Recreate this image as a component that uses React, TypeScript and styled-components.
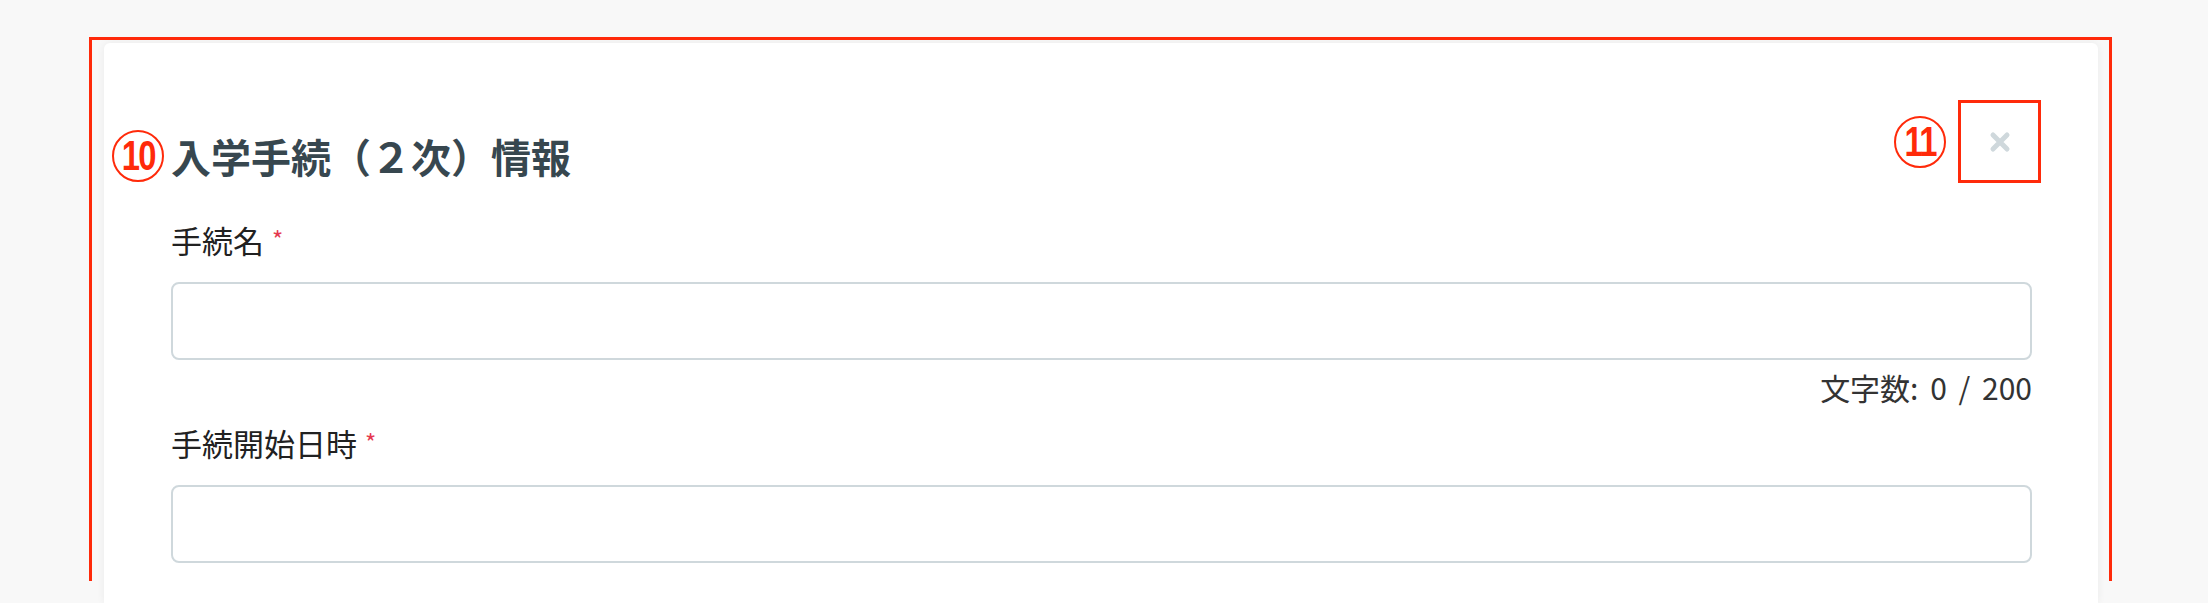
import styled, { createGlobalStyle } from 'styled-components'

const GlobalStyle = createGlobalStyle`
  html, body {
    margin: 0;
    padding: 0;
    background: #f8f8f8;
  }
  body {
    font-family: "Noto Sans CJK JP", "Noto Sans", sans-serif;
  }
`

const Page = styled.div`
  position: relative;
  height: 603px;
  overflow: hidden;
  box-sizing: border-box;
  padding: 43px 110px 0 104px;
  display: flex;
  flex-direction: column;
`

// red annotation frame drawn over the section
const Marker = styled.div`
  position: absolute;
  left: 89px;
  top: 37px;
  width: 2023px;
  height: 544px;
  box-sizing: border-box;
  border: 3px solid #ff2a0a;
  border-bottom: none;
  pointer-events: none;
`

const Card = styled.section`
  flex: 1;
  background: #fff;
  border-radius: 6px 6px 0 0;
  box-shadow: 0 0 8px rgba(0, 0, 0, 0.06);
  padding: 57px 57px 0 8px;
`

const Header = styled.div`
  display: flex;
  justify-content: space-between;
  align-items: flex-start;
  height: 83px;
`

const Title = styled.h2`
  margin: 26px 0 0;
  display: flex;
  align-items: center;
  font-size: 40px;
  line-height: 60px;
  font-weight: 700;
  color: #37474f;
`

const Badge = styled.span<{ $gap?: number }>`
  display: inline-flex;
  align-items: center;
  justify-content: center;
  box-sizing: border-box;
  width: 52px;
  height: 52px;
  border: 2px solid #ff2a0a;
  border-radius: 50%;
  color: #ff2a0a;
  font-family: "Liberation Sans Narrow", "Liberation Sans", sans-serif;
  font-weight: 700;
  font-size: 42px;
  line-height: 1;
  margin-right: ${p => p.$gap ?? 0}px;
  flex-shrink: 0;

  span {
    display: inline-block;
    transform: scaleX(0.78);
    letter-spacing: -2px;
  }
`

const Tools = styled.div`
  display: flex;
  align-items: center;
  gap: 12px;
  height: 83px;
`

const CloseButton = styled.button`
  width: 83px;
  height: 83px;
  box-sizing: border-box;
  border: 3px solid #ff2a0a;
  background: #fff;
  display: flex;
  align-items: center;
  justify-content: center;
  padding: 0;
  cursor: pointer;
`

const Form = styled.div`
  padding: 34px 9px 0 59px;
`

const Field = styled.div`
  & + & {
    margin-top: 13px;
  }
`

const Label = styled.label`
  display: block;
  font-size: 31px;
  line-height: 46px;
  color: #212121;
`

const Required = styled.span`
  display: inline-block;
  color: #e5394f;
  font-size: 24px;
  line-height: 1;
  vertical-align: 4px;
  margin-left: 8px;
`

const Input = styled.input`
  display: block;
  width: 100%;
  box-sizing: border-box;
  height: 78px;
  margin-top: 19px;
  border: 2px solid #cfd8dc;
  border-radius: 8px;
  background: #fff;
  font-size: 30px;
  padding: 0 20px;
  outline: none;
`

const Counter = styled.div`
  margin-top: 7px;
  text-align: right;
  font-size: 30px;
  line-height: 40px;
  color: #333;
  word-spacing: 5px;
`

const CloseIcon = () => (
  <svg width="22" height="22" viewBox="0 0 22 22">
    <path d="M4 4 L18 18 M18 4 L4 18" stroke="#cfd8dc" strokeWidth="5" strokeLinecap="round" />
  </svg>
)

const App = () => {
  return (
    <>
      <GlobalStyle />
      <Page>
        <Card>
          <Header>
            <Title>
              <Badge $gap={7}><span>10</span></Badge>
              入学手続（２次）情報
            </Title>
            <Tools>
              <Badge><span>11</span></Badge>
              <CloseButton aria-label="close">
                <CloseIcon />
              </CloseButton>
            </Tools>
          </Header>
          <Form>
            <Field>
              <Label>手続名<Required>*</Required></Label>
              <Input type="text" />
              <Counter>文字数: 0 / 200</Counter>
            </Field>
            <Field>
              <Label>手続開始日時<Required>*</Required></Label>
              <Input type="text" />
            </Field>
          </Form>
        </Card>
        <Marker />
      </Page>
    </>
  )
}

export default App
